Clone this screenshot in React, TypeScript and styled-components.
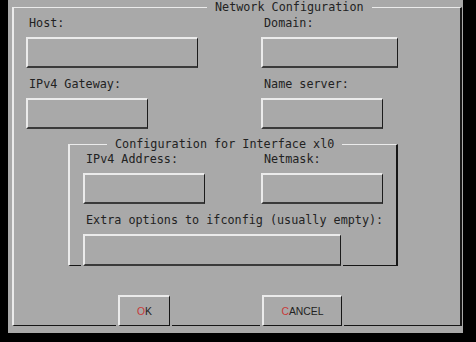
import styled, { createGlobalStyle } from "styled-components";

const GREY = "#a9a9a9";
const LIGHT = "#ebebeb";
const DARK = "#161616";

const GlobalStyle = createGlobalStyle`
  html, body {
    margin: 0;
    padding: 0;
    background: #000;
  }
  body {
    font-family: "DejaVu Sans Mono", "Liberation Mono", monospace;
  }
`;

export default function App() {
  return (
    <>
      <GlobalStyle />
      <Screen>
        <Dialog>
          <Frame $width={450} $pad="2px 0 0 12px">
            <Legend $offset={181}>Network Configuration</Legend>

            <FieldGrid $cols="235px 1fr">
              <Field label="Host:" width={172} />
              <Field label="Domain:" width={137} />
              <Field label="IPv4 Gateway:" width={122} />
              <Field label="Name server:" width={122} />
            </FieldGrid>

            <Frame $width={330} $pad="1px 0 0 13px" $inset={42} $top={8}>
              <Legend $offset={24}>Configuration for Interface xl0</Legend>
              <FieldGrid $cols="178px 1fr">
                <Field label="IPv4 Address:" width={122} />
                <Field label="Netmask:" width={122} />
                <Wide>
                  <Field
                    label="Extra options to ifconfig (usually empty):"
                    width={258}
                    last
                  />
                </Wide>
              </FieldGrid>
            </Frame>

            <ButtonRow>
              <Button $width={52}>
                <Hot>O</Hot>K
              </Button>
              <Button $width={80}>
                <Hot>C</Hot>ANCEL
              </Button>
            </ButtonRow>
          </Frame>
        </Dialog>
      </Screen>
    </>
  );
}

function Field({
  label,
  width,
  last,
}: {
  label: string;
  width: number;
  last?: boolean;
}) {
  return (
    <FieldWrap>
      <Label>{label}</Label>
      <InputBox $width={width} $last={last} />
    </FieldWrap>
  );
}

const Screen = styled.div`
  width: 476px;
  height: 342px;
  background: #000;
  overflow: hidden;
`;

const Dialog = styled.div`
  margin-left: 8px;
  width: 455px;
  height: 333px;
  background: ${GREY};
  padding-left: 4px;
  box-sizing: border-box;
`;

const Frame = styled.fieldset<{
  $width: number;
  $pad: string;
  $inset?: number;
  $top?: number;
}>`
  box-sizing: border-box;
  width: ${(p) => p.$width}px;
  min-width: 0;
  margin: ${(p) => p.$top || 0}px 0 0 ${(p) => p.$inset || 0}px;
  padding: ${(p) => p.$pad};
  border-style: solid;
  border-width: 1px 2px 1px 2px;
  border-color: ${LIGHT} ${DARK} ${DARK} ${LIGHT};
`;

const Legend = styled.legend<{ $offset: number }>`
  margin-left: ${(p) => p.$offset}px;
  padding: 0 8px;
  font-size: 11.75px;
  line-height: 14px;
  color: #222;
  white-space: pre;
`;

const FieldGrid = styled.div<{ $cols: string }>`
  display: grid;
  grid-template-columns: ${(p) => p.$cols};
  row-gap: 9px;
`;

const Wide = styled.div`
  grid-column: 1 / -1;
`;

const FieldWrap = styled.div`
  display: flex;
  flex-direction: column;
  align-items: flex-start;
`;

const Label = styled.div`
  margin-left: 3px;
  font-size: 11.75px;
  line-height: 14px;
  color: #222;
  white-space: pre;
`;

const InputBox = styled.div<{ $width: number; $last?: boolean }>`
  box-sizing: border-box;
  width: ${(p) => p.$width}px;
  height: ${(p) => (p.$last ? 32 : 31)}px;
  margin-top: 7px;
  margin-bottom: ${(p) => (p.$last ? -1 : 0)}px;
  border-style: solid;
  border-width: 2px 1px 2px 2px;
  border-color: ${LIGHT} #1c1c1c #3a3a3a ${LIGHT};
  box-shadow: ${(p) => (p.$last ? `0 0 0 2px ${GREY}` : "none")};
`;

const ButtonRow = styled.div`
  display: flex;
  gap: 92px;
  padding-left: 92px;
  margin-top: 29px;
  margin-bottom: -1px;
`;

const Button = styled.div<{ $width: number }>`
  box-sizing: border-box;
  width: ${(p) => p.$width}px;
  height: 31px;
  display: flex;
  align-items: center;
  justify-content: center;
  border-style: solid;
  border-width: 2px 1px 1px 2px;
  border-color: ${LIGHT} ${DARK} ${DARK} ${LIGHT};
  box-shadow: 0 0 0 2px ${GREY};
  background: ${GREY};
  font-family: "Liberation Sans", Arial, sans-serif;
  font-size: 10.4px;
  color: #222;
  padding-top: 1px;
`;

const Hot = styled.span`
  color: #c83a3a;
`;
